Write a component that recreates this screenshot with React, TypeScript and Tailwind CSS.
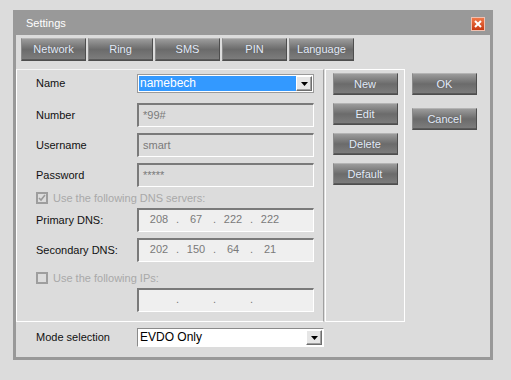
import React from "react";

const font = { fontFamily: '"Liberation Sans", Arial, sans-serif' };

const GrayButton: React.FC<{ label: string; className?: string }> = ({ label, className = "" }) => (
  <div
    className={`flex items-center justify-center text-[11px] text-[#e4ecfa] bg-gradient-to-b from-[#9c9c9c] via-[#6b6b6b] to-[#7e7e7e] border border-[#4e4e4e] border-t-[#b4b4b4] border-l-[#8a8a8a] shadow-[inset_0_-1px_0_#5a5a5a] [text-shadow:0_0_1px_#555] ${className}`}
  >
    {label}
  </div>
);

const Field: React.FC<{ children?: React.ReactNode; light?: boolean }> = ({ children, light }) => (
  <div
    className={`w-[177px] h-[24px] border-t-2 border-l-2 border-t-[#7a7a7a] border-l-[#7a7a7a] border-b border-r border-b-white border-r-white text-[11px] text-[#7a7a7a] ${
      light ? "bg-[#efefef]" : "bg-[#dcdcdc]"
    }`}
  >
    {children}
  </div>
);

const Ip: React.FC<{ parts: string[] }> = ({ parts }) => (
  <Field light>
    <div className="flex pl-[6px] pt-[2px] leading-[14px]">
      {parts.map((p, i) => (
        <React.Fragment key={i}>
          <span className="w-[28px] text-center">{p}</span>
          {i < 3 && <span className="w-[9px] text-center">.</span>}
        </React.Fragment>
      ))}
    </div>
  </Field>
);

const Arrow: React.FC = () => (
  <div className="w-[16px] h-full bg-[#e6e6e6] border border-[#6e6e6e] border-t-white border-l-white shadow-[inset_-1px_-1px_0_#a0a0a0] flex items-center justify-center">
    <svg width="7" height="4" viewBox="0 0 7 4">
      <path d="M0 0h7L3.5 4z" fill="#000" />
    </svg>
  </div>
);

const Check: React.FC<{ checked?: boolean; label: string }> = ({ checked, label }) => (
  <div className="flex items-center h-[14px] gap-[5px]">
    <div className="w-[12px] h-[12px] border-2 border-[#9e9e9e] bg-[#dcdcdc] flex items-center justify-center">
      {checked && (
        <svg width="8" height="8" viewBox="0 0 8 8">
          <path d="M1 4l2 2 4-5" stroke="#9a9a9a" strokeWidth="1.6" fill="none" />
        </svg>
      )}
    </div>
    <span className="text-[11px] text-[#a9a9a9]">{label}</span>
  </div>
);

const Row: React.FC<{ label: string; className?: string; children: React.ReactNode }> = ({ label, className = "", children }) => (
  <div className={`flex items-center ${className}`}>
    <span className="w-[101px] text-[11px] text-[#111]">{label}</span>
    {children}
  </div>
);

export default function App() {
  return (
    <div className="w-[511px] h-[380px] bg-[#dcdcdc] pt-[10px] pl-[13px]" style={font}>
      <div className="w-[480px] h-[350px] bg-[#999999] flex flex-col">
        <div className="h-[25px] flex items-center justify-between pl-[13px] pr-[8px] pt-[2px]">
          <span className="text-[11px] text-white">Settings</span>
          <div className="w-[14px] h-[14px] border border-[#f0c0b0] bg-gradient-to-b from-[#f07848] to-[#c83810] flex items-center justify-center">
            <svg width="8" height="8" viewBox="0 0 8 8">
              <path d="M1 1l6 6M7 1l-6 6" stroke="#fff" strokeWidth="2" />
            </svg>
          </div>
        </div>
        <div className="flex-1 mx-[3px] mb-[3px] bg-[#dcdcdc] flex flex-col">
          <div className="flex gap-[2px] pl-[5px] pt-[3px]">
            {["Network", "Ring", "SMS", "PIN", "Language"].map((t) => (
              <GrayButton key={t} label={t} className="w-[65px] h-[23px]" />
            ))}
          </div>
          <div className="flex mt-[8px] h-[253px]">
            <div className="w-[308px] border-t border-l border-b border-t-[#f4f4f4] border-l-white border-b-white border-r border-r-[#a0a0a0] pl-[19px] pt-[4px] flex flex-col">
              <Row label="Name" className="h-[19px]">
                <div className="w-[177px] h-[19px] border border-[#9a9a9a] bg-white p-[1px] flex">
                  <div className="flex-1 bg-[#3399ff] text-white text-[12px] leading-[15px] pl-[1px]">namebech</div>
                  <Arrow />
                </div>
              </Row>
              <Row label="Number" className="mt-[10px]">
                <Field>
                  <div className="pl-[4px] pt-[2px]">*99#</div>
                </Field>
              </Row>
              <Row label="Username" className="mt-[6px]">
                <Field>
                  <div className="pl-[4px] pt-[2px]">smart</div>
                </Field>
              </Row>
              <Row label="Password" className="mt-[6px]">
                <Field>
                  <div className="pl-[4px] pt-[2px]">*****</div>
                </Field>
              </Row>
              <div className="mt-[4px]">
                <Check checked label="Use the following DNS servers:" />
              </div>
              <Row label="Primary DNS:" className="mt-[3px]">
                <Ip parts={["208", "67", "222", "222"]} />
              </Row>
              <Row label="Secondary DNS:" className="mt-[6px]">
                <Ip parts={["202", "150", "64", "21"]} />
              </Row>
              <div className="mt-[9px]">
                <Check label="Use the following IPs:" />
              </div>
              <Row label="" className="mt-[3px]">
                <Ip parts={["", "", "", ""]} />
              </Row>
            </div>
            <div className="w-[80px] ml-[1px] border border-white flex flex-col items-center pt-[3px] gap-[8px]">
              {["New", "Edit", "Delete", "Default"].map((t) => (
                <GrayButton key={t} label={t} className="w-[65px] h-[22px]" />
              ))}
            </div>
            <div className="flex flex-col pl-[7px] pt-[4px] gap-[13px]">
              <GrayButton label="OK" className="w-[65px] h-[22px]" />
              <GrayButton label="Cancel" className="w-[65px] h-[22px]" />
            </div>
          </div>
          <div className="pl-[20px] pt-[6px]">
            <Row label="Mode selection" className="h-[19px]">
              <div className="w-[187px] h-[19px] border border-t-[#8a8a8a] border-l-[#8a8a8a] border-b-white border-r-white bg-white p-[1px] flex">
                <div className="flex-1 text-black text-[12px] leading-[15px] pl-[1px]">EVDO Only</div>
                <Arrow />
              </div>
            </Row>
          </div>
        </div>
      </div>
    </div>
  );
}
